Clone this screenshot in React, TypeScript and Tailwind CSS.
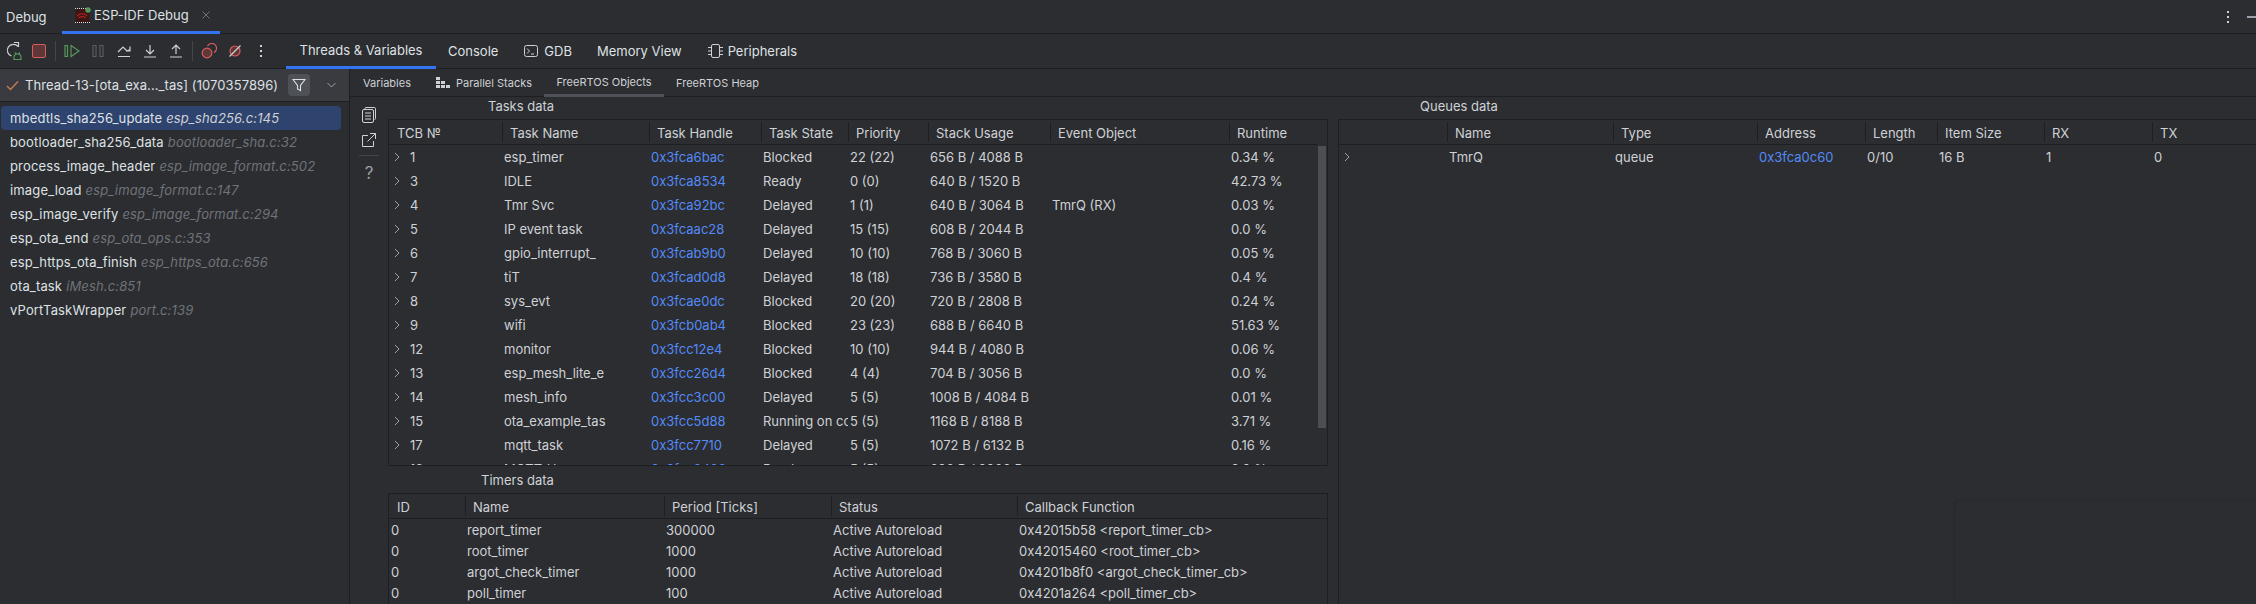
import React from 'react';

const frames: [string, string][] = [
  ['mbedtls_sha256_update', 'esp_sha256.c:145'],
  ['bootloader_sha256_data', 'bootloader_sha.c:32'],
  ['process_image_header', 'esp_image_format.c:502'],
  ['image_load', 'esp_image_format.c:147'],
  ['esp_image_verify', 'esp_image_format.c:294'],
  ['esp_ota_end', 'esp_ota_ops.c:353'],
  ['esp_https_ota_finish', 'esp_https_ota.c:656'],
  ['ota_task', 'iMesh.c:851'],
  ['vPortTaskWrapper', 'port.c:139'],
];

const tasks: string[][] = [
  ['1', 'esp_timer', '0x3fca6bac', 'Blocked', '22 (22)', '656 B / 4088 B', '', '0.34 %'],
  ['3', 'IDLE', '0x3fca8534', 'Ready', '0 (0)', '640 B / 1520 B', '', '42.73 %'],
  ['4', 'Tmr Svc', '0x3fca92bc', 'Delayed', '1 (1)', '640 B / 3064 B', 'TmrQ (RX)', '0.03 %'],
  ['5', 'IP event task', '0x3fcaac28', 'Delayed', '15 (15)', '608 B / 2044 B', '', '0.0 %'],
  ['6', 'gpio_interrupt_', '0x3fcab9b0', 'Delayed', '10 (10)', '768 B / 3060 B', '', '0.05 %'],
  ['7', 'tiT', '0x3fcad0d8', 'Delayed', '18 (18)', '736 B / 3580 B', '', '0.4 %'],
  ['8', 'sys_evt', '0x3fcae0dc', 'Blocked', '20 (20)', '720 B / 2808 B', '', '0.24 %'],
  ['9', 'wifi', '0x3fcb0ab4', 'Blocked', '23 (23)', '688 B / 6640 B', '', '51.63 %'],
  ['12', 'monitor', '0x3fcc12e4', 'Blocked', '10 (10)', '944 B / 4080 B', '', '0.06 %'],
  ['13', 'esp_mesh_lite_e', '0x3fcc26d4', 'Blocked', '4 (4)', '704 B / 3056 B', '', '0.0 %'],
  ['14', 'mesh_info', '0x3fcc3c00', 'Delayed', '5 (5)', '1008 B / 4084 B', '', '0.01 %'],
  ['15', 'ota_example_tas', '0x3fcc5d88', 'Running on core', '5 (5)', '1168 B / 8188 B', '', '3.71 %'],
  ['17', 'mqtt_task', '0x3fcc7710', 'Delayed', '5 (5)', '1072 B / 6132 B', '', '0.16 %'],
  ['18', 'MQTT_U', '0x3fcc9408', 'Ready', '5 (5)', '696 B / 3060 B', '', '0.0 %'],
];

const timers: string[][] = [
  ['0', 'report_timer', '300000', 'Active Autoreload', '0x42015b58 <report_timer_cb>'],
  ['0', 'root_timer', '1000', 'Active Autoreload', '0x42015460 <root_timer_cb>'],
  ['0', 'argot_check_timer', '1000', 'Active Autoreload', '0x4201b8f0 <argot_check_timer_cb>'],
  ['0', 'poll_timer', '100', 'Active Autoreload', '0x4201a264 <poll_timer_cb>'],
];

const TASK_COLS = 'grid-cols-[113px_147px_112px_87px_80px_122px_179px_89px]';
const TIMER_COLS = 'grid-cols-[76px_199px_167px_186px_1fr]';
const QUEUE_COLS = 'grid-cols-[108px_166px_144px_108px_72px_107px_108px_1fr]';

const Chevron = () => (
  <svg width="6" height="10" viewBox="0 0 6 10" fill="none" stroke="#9da0a8" strokeWidth="1">
    <path d="M1 1l4 4-4 4" />
  </svg>
);

const HeaderRow = ({ cols, labels, className = '' }: { cols: string; labels: string[]; className?: string }) => (
  <div className={`grid h-[25px] border-b border-[#1e1f22] text-[#cfd1d6] ${cols} ${className}`}>
    {labels.map((label, i) => (
      <div key={i} className={`my-[2px] flex items-center overflow-hidden pt-[1px] whitespace-nowrap ${i > 0 ? 'border-l border-[#1e1f22] pl-[7px]' : 'pl-[8px]'}`}>
        {label}
      </div>
    ))}
  </div>
);

const Cell = ({ text, link }: { text: string; link?: boolean }) => (
  <div className={`flex items-center overflow-hidden pl-[2px] whitespace-nowrap ${link ? 'text-[#548af7]' : 'text-[#cfd1d6]'}`}>{text}</div>
);

const ToolbarIcons = () => (
  <div className="flex h-full w-[286px] items-center">
    <svg className="ml-[5px]" width="18" height="20" viewBox="0 0 18 20" fill="none">
      <path d="M13 5.500A6 6 0 1 0 6.500 15" stroke="#ced0d6" strokeWidth="1.2" />
      <path d="M9 1.500h4.500V6" stroke="#ced0d6" strokeWidth="1.2" />
      <path d="M9 16.500a3.500 3.500 0 0 1 7 0v2H9z M10 11.500l1.500 1.500M15 11.500L13.500 13" stroke="#57965c" strokeWidth="1.2" />
    </svg>
    <div className="ml-[9px] box-content h-[12px] w-[12px] rounded-[2px] border border-[#db5c5c] bg-[#5e3838]" />
    <div className="ml-[9px] h-[20px] w-px bg-[#43454a]" />
    <svg className="ml-[8px]" width="16" height="14" viewBox="0 0 16 14" fill="none" stroke="#57965c" strokeWidth="1.2">
      <path d="M1 1.500h2.500v11H1z" />
      <path d="M7 1.500l8 5.500-8 5.500z" />
    </svg>
    <svg className="ml-[12px]" width="12" height="14" viewBox="0 0 12 14" fill="none" stroke="#5a5d63" strokeWidth="1.2">
      <path d="M1 1.500h3v11H1zM8 1.500h3v11H8z" />
    </svg>
    <svg className="ml-[13px]" width="14" height="14" viewBox="0 0 14 14" fill="none" stroke="#ced0d6" strokeWidth="1.2">
      <path d="M1 8l5-5 4 4 3-1.500M13 2.500V7H9M1 12.500h12" />
    </svg>
    <svg className="ml-[12px]" width="14" height="14" viewBox="0 0 14 14" fill="none" stroke="#ced0d6" strokeWidth="1.2">
      <path d="M7 1v8M3 6l4 4 4-4M1 13h12" />
    </svg>
    <svg className="ml-[12px]" width="14" height="14" viewBox="0 0 14 14" fill="none" stroke="#ced0d6" strokeWidth="1.2">
      <path d="M7 10V2M3 5l4-4 4 4M1 13h12" />
    </svg>
    <div className="ml-[9px] h-[20px] w-px bg-[#43454a]" />
    <svg className="ml-[8px]" width="16" height="16" viewBox="0 0 16 16" fill="none" stroke="#db5c5c" strokeWidth="1.2">
      <circle cx="6" cy="10" r="4.800" fill="#5e3838" />
      <path d="M6.500 3a4.800 4.800 0 1 1 6.500 6.500" />
    </svg>
    <svg className="ml-[11px]" width="14" height="14" viewBox="0 0 14 14" fill="none" strokeWidth="1.2">
      <circle cx="7" cy="7" r="5" fill="#5e3838" stroke="#db5c5c" />
      <path d="M1.500 12.500L12.500 1.500" stroke="#ced0d6" />
    </svg>
    <div className="ml-[18px] flex flex-col gap-[3px]">
      <div className="h-[2px] w-[2px] bg-[#ced0d6]" />
      <div className="h-[2px] w-[2px] bg-[#ced0d6]" />
      <div className="h-[2px] w-[2px] bg-[#ced0d6]" />
    </div>
  </div>
);

const TopBar = () => (
  <div className="flex h-[34px] items-stretch border-b border-[#1e1f22]">
    <div className="flex w-[62px] items-center pl-[6px] text-[#dfe1e5]">Debug</div>
    <div className="relative flex h-[34px] w-[158px] items-center border-b-[3px] border-[#3574f0] pb-[1px] pl-[13px]">
      <svg width="16" height="17" viewBox="0 0 16 17" fill="none">
        <rect x="0.500" y="1.500" width="14" height="14" fill="#3a1715" />
        <path d="M0 1.500h15M0 15.500h15" stroke="#dfe1e5" strokeDasharray="1 1" />
        <path d="M2 9c3-3 7-3 10 0M3.500 11c2.500-2 5-2 7 0" stroke="#a3201d" strokeWidth="1.500" />
        <circle cx="13" cy="3" r="2.700" fill="#57965c" />
      </svg>
      <span className="ml-[3px] text-[#dfe1e5]">ESP-IDF Debug</span>
      <svg className="ml-[13px]" width="8" height="8" viewBox="0 0 8 8" stroke="#6f737a" strokeWidth="1">
        <path d="M.5.500l7 7M7.500.500l-7 7" />
      </svg>
    </div>
    <div className="ml-auto flex items-center">
      <div className="flex flex-col gap-[3px]">
        <div className="h-[2px] w-[2px] bg-[#ced0d6]" />
        <div className="h-[2px] w-[2px] bg-[#ced0d6]" />
        <div className="h-[2px] w-[2px] bg-[#ced0d6]" />
      </div>
      <div className="ml-[18px] h-[2px] w-[9px] bg-[#9da0a8]" />
    </div>
  </div>
);

const MainTabs = () => (
  <div className="flex h-[35px] items-stretch border-b border-[#1e1f22] text-[#dfe1e5]">
    <ToolbarIcons />
    <div className="relative flex h-[35px] w-[150px] items-center justify-center border-b-[3px] border-[#3574f0]">Threads &amp; Variables</div>
    <div className="ml-[12px] flex items-center">Console</div>
    <div className="ml-[26px] flex items-center">
      <svg width="14" height="14" viewBox="0 0 14 14" fill="none" stroke="#ced0d6" strokeWidth="1">
        <rect x="0.500" y="1.500" width="13" height="11" rx="2" />
        <path d="M3 4.500L5.500 7 3 9.500M7 10h3" />
      </svg>
      <span className="ml-[6px]">GDB</span>
    </div>
    <div className="ml-[25px] flex items-center">Memory View</div>
    <div className="ml-[26px] flex items-center">
      <svg width="15" height="16" viewBox="0 0 15 16" fill="none" stroke="#ced0d6" strokeWidth="1">
        <rect x="3.500" y="1.500" width="8" height="13" rx="1.500" />
        <path d="M0 4.500h3M0 8h3M0 11.500h3M12 4.500h3M12 8h3M12 11.500h3" />
      </svg>
      <span className="ml-[5px]">Peripherals</span>
    </div>
  </div>
);

const ThreadPanel = () => (
  <div className="flex w-[350px] flex-col border-r border-[#1e1f22]">
    <div className="flex h-[33px] items-center border-b border-[#1e1f22] bg-[#393b40]">
      <svg className="ml-[6px]" width="13" height="11" viewBox="0 0 13 11" fill="none" stroke="#c77d55" strokeWidth="1.300">
        <path d="M1 6l3.500 3.500L12 1.500" />
      </svg>
      <span className="ml-[6px] w-[263px] tracking-[0.08px] whitespace-nowrap text-[#dfe1e5]">Thread-13-[ota_exa..._tas] (1070357896)</span>
      <div className="flex h-[22px] w-[22px] items-center justify-center rounded-[4px] bg-[#4e5157]">
        <svg width="14" height="14" viewBox="0 0 14 14" fill="none" stroke="#dfe1e5" strokeWidth="1.100">
          <path d="M1 1.500h12L8.500 7.500v5l-3-1.500V7.500z" />
        </svg>
      </div>
      <svg className="ml-[17px]" width="9" height="6" viewBox="0 0 9 6" fill="none" stroke="#9da0a8" strokeWidth="1">
        <path d="M.5 1l4 4 4-4" />
      </svg>
    </div>
    <div className="flex flex-col pt-[4px]">
      {frames.map(([name, file], i) => (
        <div key={name} className={`mx-[1px] flex h-[24px] w-[340px] items-center rounded-[4px] pl-[9px] tracking-[0.15px] whitespace-nowrap ${i === 0 ? 'bg-[#2e436e]' : ''}`}>
          <span className="text-[#dfe1e5]">{name}</span>
          <span className={`ml-[4px] italic ${i === 0 ? 'text-[#cfd1d6]' : 'text-[#6f737a]'}`}>{file}</span>
        </div>
      ))}
    </div>
  </div>
);

const SubTabs = () => (
  <div className="flex h-[28px] items-stretch border-b border-[#1e1f22] text-[11px] text-[#cfd1d6]">
    <div className="ml-[13px] flex items-center">Variables</div>
    <div className="ml-[25px] flex items-center">
      <svg width="14" height="11" viewBox="0 0 14 11" fill="#ced0d6">
        <path d="M0 0h4v3H0zM0 4h4v3H0zM5 4h4v3H5zM0 8h4v3H0zM5 8h4v3H5zM10 8h4v3h-4z" />
      </svg>
      <span className="ml-[6px]">Parallel Stacks</span>
    </div>
    <div className="relative ml-[12px] flex h-[28px] w-[120px] items-center justify-center border-b-[3px] border-[#4e5157]">FreeRTOS Objects</div>
    <div className="ml-[12px] flex items-center">FreeRTOS Heap</div>
  </div>
);

const SideIcons = () => (
  <div className="flex w-[38px] flex-col items-center pt-[10px]">
    <svg width="14" height="16" viewBox="0 0 14 16" fill="none" stroke="#ced0d6" strokeWidth="1">
      <path d="M3 2.500V1.500a1 1 0 0 1 1-1h8.500a1 1 0 0 1 1 1v10a1 1 0 0 1-1 1" />
      <rect x="0.500" y="2.500" width="11" height="13" rx="1.500" />
      <path d="M3 6h6M3 9h6M3 12h6" />
    </svg>
    <svg className="mt-[10px]" width="14" height="14" viewBox="0 0 14 14" fill="none" stroke="#ced0d6" strokeWidth="1">
      <path d="M6 2.500H.5v11h11V8M8 .5h5.500V6M13.500.5L5.500 8.500" />
    </svg>
    <div className="mt-[8px] h-px w-[20px] bg-[#43454a]" />
    <div className="mt-[7px] text-[17px] leading-[20px] text-[#9da0a8]">?</div>
  </div>
);

const TasksTable = () => (
  <div className="relative h-[347px] overflow-hidden border border-[#1e1f22]">
    <HeaderRow cols={TASK_COLS} className="mr-[10px]" labels={['TCB №', 'Task Name', 'Task Handle', 'Task State', 'Priority', 'Stack Usage', 'Event Object', 'Runtime']} />
    {tasks.map((row) => (
      <div key={row[0]} className={`grid h-[24px] ${TASK_COLS}`}>
        <div className="flex items-center pl-[5px] text-[#cfd1d6]">
          <Chevron />
          <span className="ml-[10px]">{row[0]}</span>
        </div>
        {row.slice(1).map((text, i) => (
          <Cell key={i} text={text} link={i === 1} />
        ))}
      </div>
    ))}
    <div className="absolute top-[26px] right-[1px] h-[282px] w-[8px] bg-[#4d4e51]" />
  </div>
);

const TimersTable = () => (
  <div className="flex-1 border-x border-t border-[#1e1f22]">
    <HeaderRow cols={TIMER_COLS} labels={['ID', 'Name', 'Period [Ticks]', 'Status', 'Callback Function']} />
    {timers.map((row) => (
      <div key={row[1]} className={`grid h-[21px] ${TIMER_COLS}`}>
        {row.map((text, i) => (
          <Cell key={i} text={text} />
        ))}
      </div>
    ))}
  </div>
);

const QueuesTable = () => (
  <div className="flex-1 border-t border-l border-[#1e1f22]">
    <HeaderRow cols={QUEUE_COLS} labels={['', 'Name', 'Type', 'Address', 'Length', 'Item Size', 'RX', 'TX']} />
    <div className={`grid h-[24px] ${QUEUE_COLS}`}>
      <div className="flex items-center pl-[5px]">
        <Chevron />
      </div>
      {['TmrQ', 'queue', '0x3fca0c60', '0/10', '16 B', '1', '0'].map((text, i) => (
        <Cell key={i} text={text} link={i === 2} />
      ))}
    </div>
  </div>
);

export default function App() {
  return (
    <div className="relative flex h-[604px] w-[2256px] flex-col overflow-hidden bg-[#2b2d30] text-[13px] leading-[16px] [font-family:Inter,sans-serif]">
      <TopBar />
      <MainTabs />
      <div className="flex min-h-0 flex-1">
        <ThreadPanel />
        <div className="flex min-w-0 flex-1 flex-col">
          <SubTabs />
          <div className="flex min-h-0 flex-1">
            <SideIcons />
            <div className="flex w-[940px] flex-col">
              <div className="flex h-[22px] items-center pb-[4px] pl-[100px] text-[#cfd1d6]">Tasks data</div>
              <TasksTable />
              <div className="flex h-[27px] items-center pl-[93px] text-[#cfd1d6]">Timers data</div>
              <TimersTable />
            </div>
            <div className="ml-[10px] flex min-w-0 flex-1 flex-col">
              <div className="flex h-[22px] items-center pb-[4px] pl-[82px] text-[#cfd1d6]">Queues data</div>
              <QueuesTable />
            </div>
          </div>
        </div>
      </div>
      <div className="pointer-events-none absolute top-[499px] left-[1954px] h-[120px] w-[320px] rounded-tl-[6px] border-t border-l border-[#28292c]" />
    </div>
  );
}
